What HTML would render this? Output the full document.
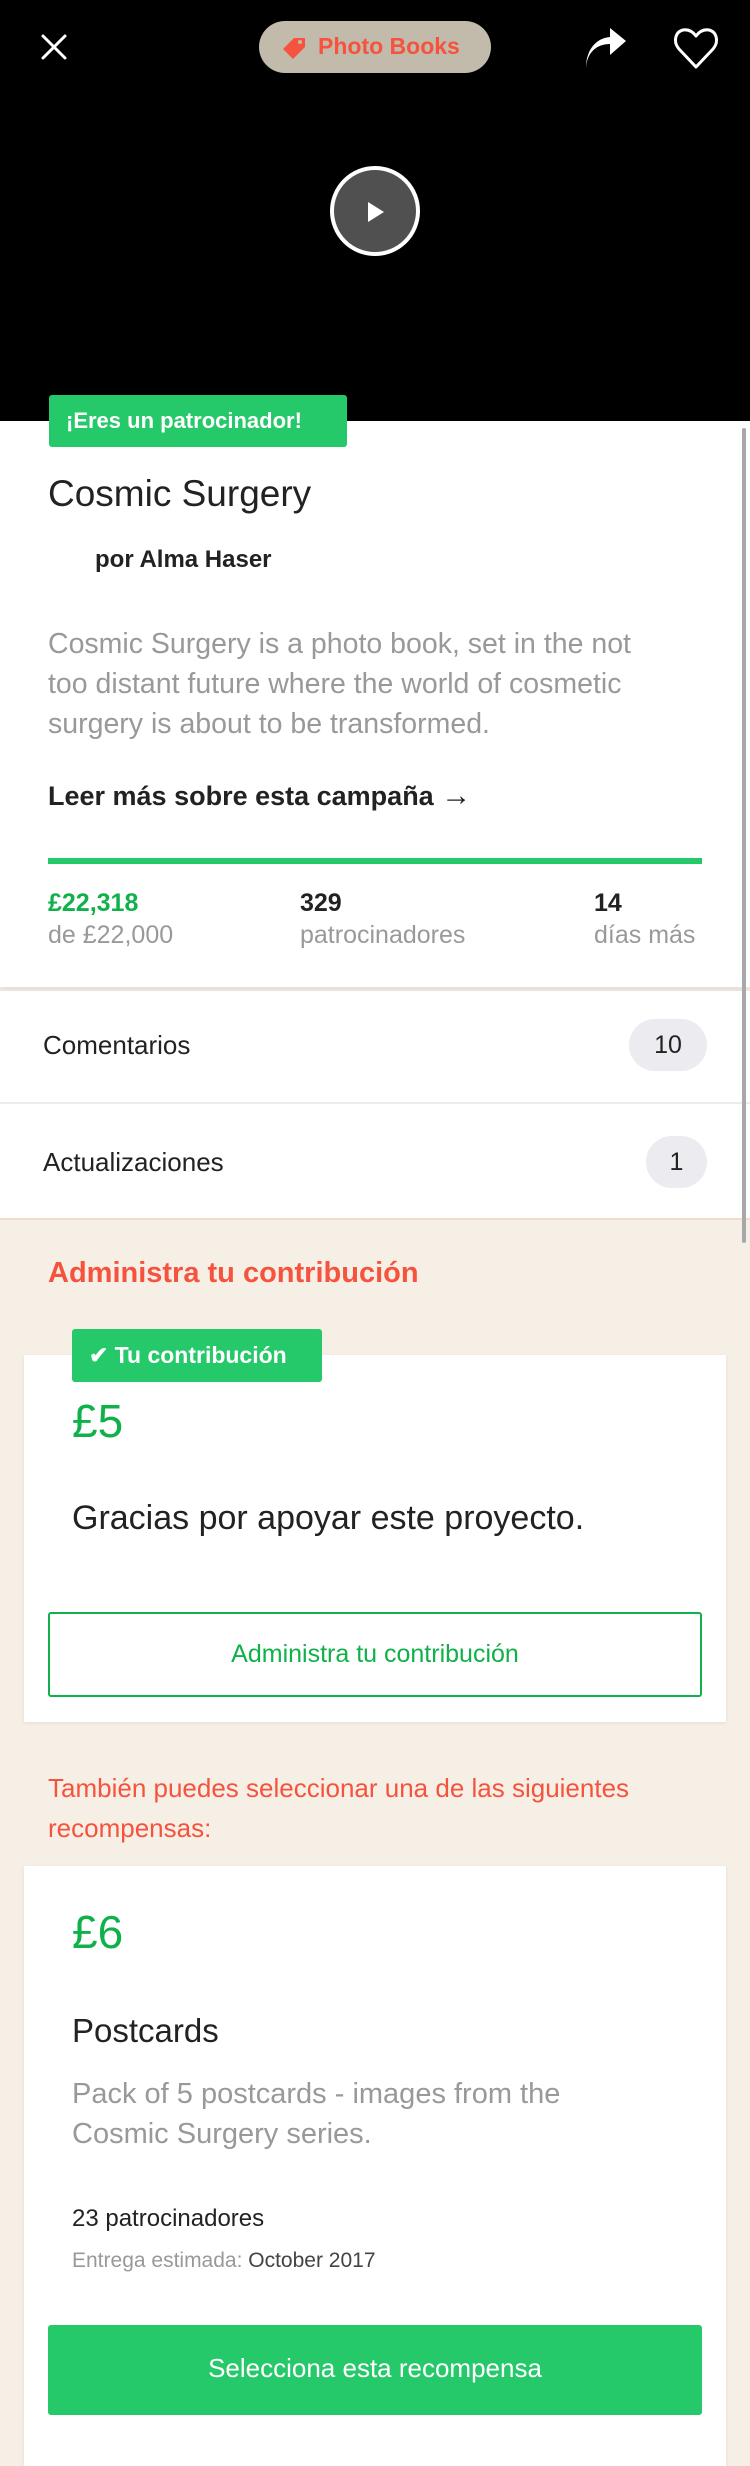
<!DOCTYPE html>
<html><head><meta charset="utf-8"><style>
*{margin:0;padding:0;box-sizing:border-box}
body{width:750px;height:2400px;overflow:hidden;background:#f6efe5;font-family:"Liberation Sans",sans-serif;position:relative}
.a{position:absolute;white-space:nowrap}
</style></head><body>
<div class="a" style="left:0;top:0;width:750px;height:421px;background:#000"></div>
<svg class="a" style="left:40px;top:33px" width="28" height="28" viewBox="0 0 28 28"><path d="M3 3L25 25M25 3L3 25" stroke="#fff" stroke-width="3" stroke-linecap="round"/></svg>
<div class="a" style="left:259px;top:21px;width:232px;height:52px;border-radius:26px;background:#c2baab"></div>
<svg class="a" style="left:281px;top:36px" width="26" height="24" viewBox="0 0 26 24"><path d="M2 13L13 2H24V11L12 23Z" fill="#f5533d"/><circle cx="19" cy="6" r="2" fill="#c2baab"/></svg>
<div class="a" style="left:318px;top:33px;font-size:23px;font-weight:bold;color:#f5533d">Photo Books</div>
<svg class="a" style="left:584px;top:28px" width="44" height="42" viewBox="0 0 44 42"><path d="M2 40C3 24 13 16 26 16V27L42 13L26 0V9C12 10 2 22 2 40Z" fill="#fff"/></svg>
<svg class="a" style="left:673px;top:27px" width="46" height="42" viewBox="0 0 46 42"><path d="M23 40L6 22C0 15 2 5 10 3C16 2 20 5 23 9C26 5 30 2 36 3C44 5 46 15 40 22Z" fill="none" stroke="#fff" stroke-width="3" stroke-linejoin="round"/></svg>
<div class="a" style="left:330px;top:166px;width:90px;height:90px;border-radius:50%;background:#505050;border:4px solid #fff"></div>
<svg class="a" style="left:366px;top:201px" width="20" height="22" viewBox="0 0 20 22"><path d="M2 1L18 11L2 21Z" fill="#fff"/></svg>
<div class="a" style="left:0;top:421px;width:750px;height:566px;background:#fff;box-shadow:0 4px 8px rgba(0,0,0,.08)"></div>
<div class="a" style="left:49px;top:395px;width:298px;height:52px;background:#26c96a;border-radius:3px;color:#fff;font-size:22px;font-weight:bold;line-height:52px;padding-left:17px">¡Eres un patrocinador!</div>
<div class="a" style="left:48px;top:473px;font-size:37px;color:#222">Cosmic Surgery</div>
<div class="a" style="left:95px;top:546px;font-size:24px;font-weight:bold;color:#222">por Alma Haser</div>
<div class="a" style="left:48px;top:624px;font-size:28.5px;line-height:40px;color:#999">Cosmic Surgery is a photo book, set in the not<br>too distant future where the world of cosmetic<br>surgery is about to be transformed.</div>
<div class="a" style="left:48px;top:779px;font-size:27px;font-weight:bold;color:#222">Leer más sobre esta campaña <span style="font-size:30px">→</span></div>
<div class="a" style="left:48px;top:858px;width:654px;height:6px;background:#26c96a"></div>
<div class="a" style="left:48px;top:889px;font-size:25px;font-weight:bold;color:#10b04a">£22,318</div>
<div class="a" style="left:48px;top:921px;font-size:25px;color:#999">de £22,000</div>
<div class="a" style="left:300px;top:889px;font-size:25px;font-weight:bold;color:#222">329</div>
<div class="a" style="left:300px;top:921px;font-size:25px;color:#999">patrocinadores</div>
<div class="a" style="left:594px;top:889px;font-size:25px;font-weight:bold;color:#222">14</div>
<div class="a" style="left:594px;top:921px;font-size:25px;color:#999">días más</div>
<div class="a" style="left:0;top:991px;width:750px;height:229px;background:#fff;border-bottom:2px solid #f6d9cc"></div>
<div class="a" style="left:0;top:1102px;width:750px;height:2px;background:#ececec"></div>
<div class="a" style="left:43px;top:1030px;font-size:26px;color:#222">Comentarios</div>
<div class="a" style="left:629px;top:1019px;width:78px;height:52px;border-radius:26px;background:#ececf0;text-align:center;line-height:52px;font-size:25px;color:#222">10</div>
<div class="a" style="left:43px;top:1147px;font-size:26px;color:#222">Actualizaciones</div>
<div class="a" style="left:646px;top:1136px;width:61px;height:52px;border-radius:26px;background:#ececf0;text-align:center;line-height:52px;font-size:25px;color:#222">1</div>
<div class="a" style="left:742px;top:428px;width:4px;height:815px;border-radius:2px;background:#a8a8a8"></div>
<div class="a" style="left:48px;top:1257px;font-size:29px;font-weight:bold;color:#f5533d">Administra tu contribución</div>
<div class="a" style="left:24px;top:1355px;width:702px;height:367px;background:#fff;box-shadow:0 1px 4px rgba(0,0,0,.08)"></div>
<div class="a" style="left:72px;top:1329px;width:250px;height:53px;background:#26c96a;border-radius:3px;color:#fff;font-size:23px;font-weight:bold;line-height:53px;padding-left:17px">✔ Tu contribución</div>
<div class="a" style="left:72px;top:1394px;font-size:46px;color:#10b04a">£5</div>
<div class="a" style="left:72px;top:1499px;font-size:34px;color:#222">Gracias por apoyar este proyecto.</div>
<div class="a" style="left:48px;top:1612px;width:654px;height:85px;border:2px solid #10b04a;border-radius:3px;text-align:center;line-height:81px;font-size:25px;color:#10b04a">Administra tu contribución</div>
<div class="a" style="left:48px;top:1768px;font-size:26px;line-height:40px;color:#f5533d">También puedes seleccionar una de las siguientes<br>recompensas:</div>
<div class="a" style="left:24px;top:1866px;width:702px;height:600px;background:#fff;box-shadow:0 1px 4px rgba(0,0,0,.08)"></div>
<div class="a" style="left:72px;top:1905px;font-size:46px;color:#10b04a">£6</div>
<div class="a" style="left:72px;top:2012px;font-size:33px;color:#222">Postcards</div>
<div class="a" style="left:72px;top:2074px;font-size:29px;line-height:40px;color:#999">Pack of 5 postcards - images from the<br>Cosmic Surgery series.</div>
<div class="a" style="left:72px;top:2205px;font-size:24px;color:#222">23 patrocinadores</div>
<div class="a" style="left:72px;top:2249px;font-size:21px;color:#999">Entrega estimada: <span style="color:#444">October 2017</span></div>
<div class="a" style="left:48px;top:2325px;width:654px;height:90px;background:#26c96a;border-radius:3px;text-align:center;line-height:86px;font-size:26px;color:#fff">Selecciona esta recompensa</div>
</body></html>
